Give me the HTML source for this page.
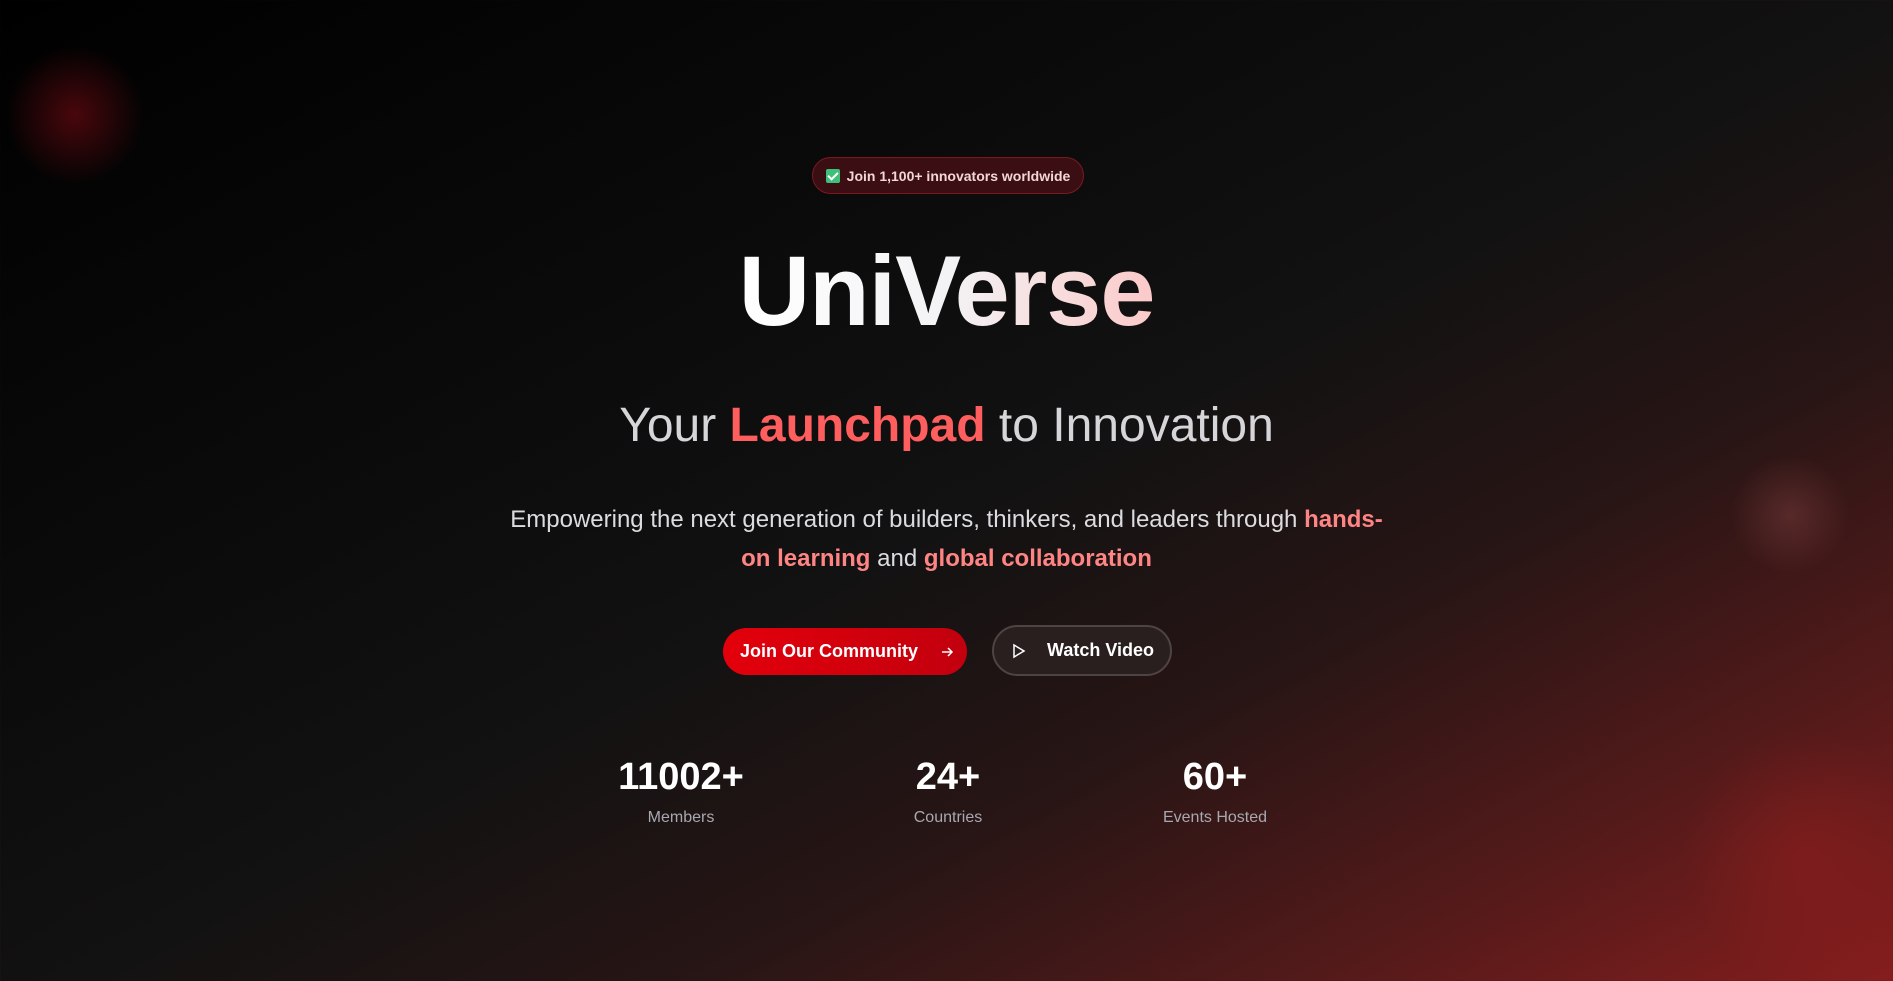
<!DOCTYPE html>
<html><head><meta charset="utf-8"><style>
*{margin:0;padding:0;box-sizing:border-box}
html,body{width:1893px;height:981px;overflow:hidden}
body{font-family:"Liberation Sans",sans-serif;color:#fff;position:relative;
background:linear-gradient(152deg,#000 0%,#0a0a0a 30%,#131212 52%,#281515 68%,#551a1a 85%,#861d1d 100%);}
.blob{position:absolute;border-radius:50%}
.c{position:absolute;left:0;width:1893px;text-align:center}
.badge{position:absolute;left:812px;top:157px;width:272px;height:37px;border-radius:19px;background:#3a0e12;border:1px solid #7a1a20;font-size:14px;font-weight:bold;color:#f3d6d6;display:flex;align-items:center;justify-content:center;gap:7px}
.chk{width:14px;height:14px;background:#3fc07a;border-radius:2px;display:inline-block;position:relative}
.chk:after{content:"";position:absolute;left:4px;top:1px;width:4px;height:8px;border:solid #fff;border-width:0 2px 2px 0;transform:rotate(45deg)}
h1{font-size:99px;font-weight:bold;letter-spacing:-1px;background:linear-gradient(90deg,#fff 0%,#f3f3f5 50%,#fbc9c9 100%);-webkit-background-clip:text;color:transparent;display:inline-block}
.btn1{position:absolute;left:723px;top:628px;width:244px;height:47px;border-radius:24px;background:linear-gradient(90deg,#e3000b,#c2000e);font-size:18px;font-weight:bold;display:flex;align-items:center;padding-left:17px}
.btn2{position:absolute;left:992px;top:625px;width:180px;height:51px;border-radius:26px;background:#2a1f1f;border:2px solid #4e4444;font-size:18px;font-weight:bold;display:flex;align-items:center;padding-left:18px}
.stat{position:absolute;top:755px;width:240px;text-align:center}
.stat b{display:block;font-size:38px;line-height:44px}
.stat span{display:block;font-size:16px;color:#a8a8b0;margin-top:10px}
</style></head><body>
<div class="blob" style="left:5px;top:45px;width:140px;height:140px;background:radial-gradient(circle,rgba(120,10,18,.6),rgba(100,10,15,0) 70%)"></div>
<div class="blob" style="left:1730px;top:455px;width:120px;height:120px;background:radial-gradient(circle,rgba(120,60,60,.5),rgba(100,40,40,0) 70%)"></div>
<div class="blob" style="left:1680px;top:730px;width:250px;height:250px;background:radial-gradient(circle,rgba(150,30,30,.45),rgba(120,25,25,0) 70%)"></div>
<div class="badge"><span class="chk"></span>Join 1,100+ innovators worldwide</div>
<div class="c" style="top:231px;line-height:120px"><h1>UniVerse</h1></div>
<div class="c" style="top:396px;font-size:48px;color:#d6d6da;line-height:60px">Your <b style="color:#ff5e5e">Launchpad</b> to Innovation</div>
<div class="c" style="top:500px;font-size:24px;line-height:39px;color:#dcdce0"><div style="width:900px;margin:0 auto">Empowering the next generation of builders, thinkers, and leaders through <b style="color:#ff8585">hands-on learning</b> and <b style="color:#ff8585">global collaboration</b></div></div>
<div class="btn1">Join Our Community<svg style="margin-left:22px" width="14" height="14" viewBox="0 0 14 14" fill="none" stroke="#fff" stroke-width="1.5"><path d="M2 7h10M8 3l4 4-4 4"/></svg></div>
<div class="btn2"><svg width="14" height="16" viewBox="0 0 14 16" fill="none" stroke="#fff" stroke-width="1.5"><path d="M2 2l10 6-10 6z"/></svg><span style="margin-left:21px">Watch Video</span></div>
<div class="stat" style="left:561px"><b>11002+</b><span>Members</span></div>
<div class="stat" style="left:828px"><b>24+</b><span>Countries</span></div>
<div class="stat" style="left:1095px"><b>60+</b><span>Events Hosted</span></div>
</body></html>
